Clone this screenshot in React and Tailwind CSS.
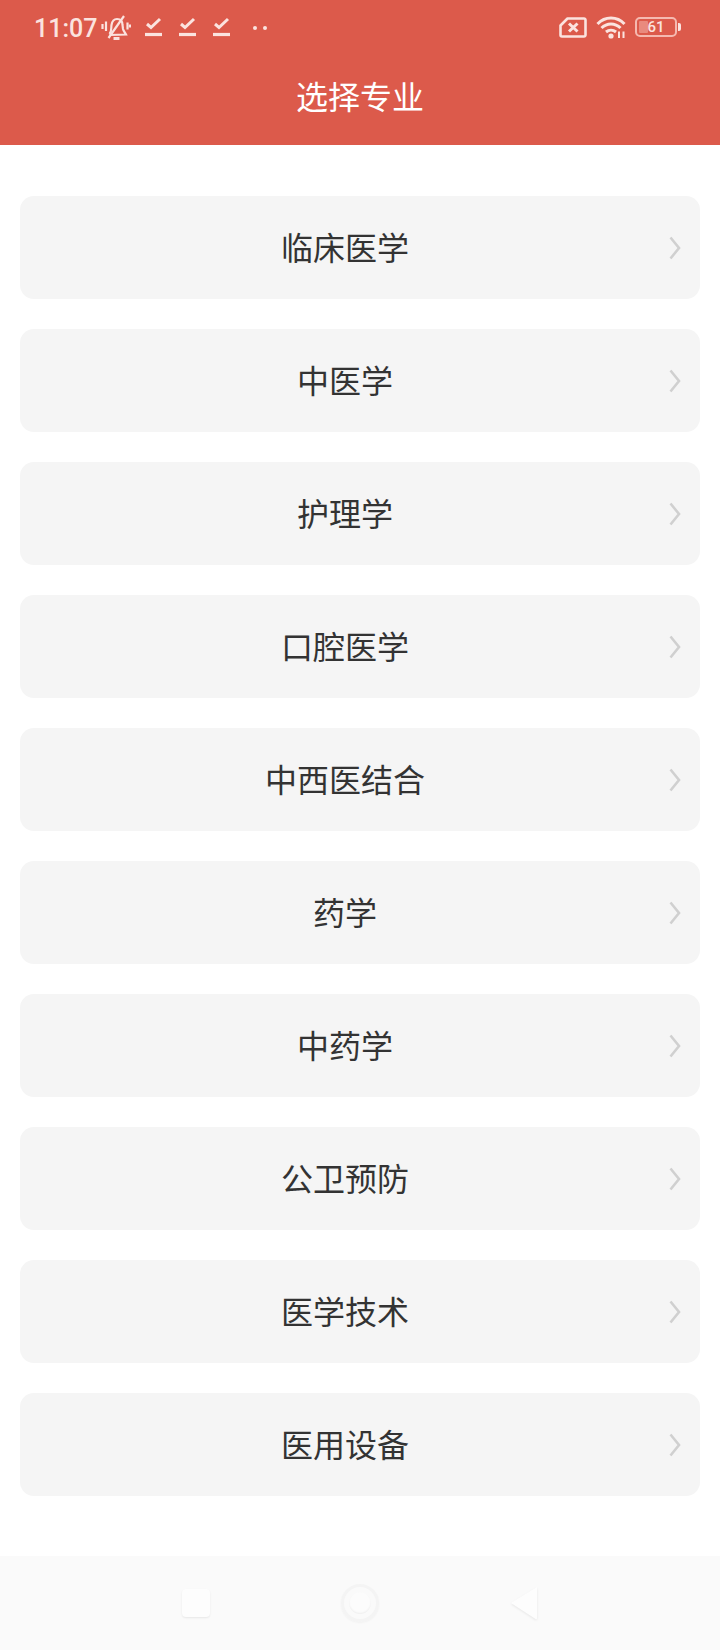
const items = ["临床医学","中医学","护理学","口腔医学","中西医结合","药学","中药学","公卫预防","医学技术","医用设备"];

function Check() {
  return (
    <svg width="17" height="20" viewBox="0 0 17 20" fill="none" stroke="#fbe3df">
      <path d="M2 7 L6 10.5 L15 2" strokeWidth="3" />
      <path d="M0 17.5 H17" strokeWidth="3.2" />
    </svg>
  );
}

function Bell() {
  return (
    <svg width="30" height="26" viewBox="0 0 30 26" fill="none" stroke="#fbe3df" strokeWidth="2.2">
      <path d="M8.5 19 C11 16 10 13 10.5 10 C11.2 6 13.5 4 16 4 C19.5 4 21.5 6.5 21.5 10 L22 14 C22.5 16 24 17.5 25 19.5 L8.5 20" />
      <path d="M12.5 23.5 H18.5" strokeWidth="3" />
      <path d="M7.5 23 L23 1" />
      <path d="M1.5 9 V14 M5 6.5 V16 M26.5 7.5 V14.5 M29 9.5 V12.5" strokeWidth="2.2" />
    </svg>
  );
}

function Sim() {
  return (
    <svg width="28" height="21" viewBox="0 0 28 21" fill="none" stroke="#fbe3df">
      <path d="M8.5 1.5 H25 A1.5 1.5 0 0 1 26.5 3 V18 A1.5 1.5 0 0 1 25 19.5 H3 A1.5 1.5 0 0 1 1.5 18 V8.5 Z" strokeWidth="2.6" strokeLinejoin="round" />
      <path d="M10 6.5 L18.5 14.5 M18.5 6.5 L10 14.5" strokeWidth="3" />
    </svg>
  );
}

function Wifi() {
  return (
    <svg width="30" height="23" viewBox="0 0 30 23" fill="none" stroke="#fbe3df">
      <path d="M1.5 8 C9 0 21 0 28.5 8" strokeWidth="3" />
      <path d="M5.5 12 C11 6.5 19 6.5 24.5 12" strokeWidth="3" />
      <path d="M10 16 C13 13.5 17 13.5 20 16" strokeWidth="3" />
      <circle cx="15" cy="20" r="2.6" fill="#fbe3df" stroke="none" />
      <path d="M23 15.5 V22 M27.5 15.5 V22" strokeWidth="2" />
    </svg>
  );
}

function Battery() {
  return (
    <div className="flex items-center gap-[1px]">
      <div className="relative flex h-[20px] w-[42px] items-center justify-center rounded-[5px] border-2 border-[#f5b9b0]">
        <div className="absolute top-[2px] bottom-[2px] left-[2px] w-[9px] rounded-[1px] bg-[#e98a7e]" />
        <span className="relative text-[15px] leading-none font-medium text-[#fbe3df] font-['Roboto',sans-serif]">61</span>
      </div>
      <div className="h-[8px] w-[3px] rounded-r-[2px] bg-[#fbe3df]" />
    </div>
  );
}

export default function App() {
  return (
    <div className="flex h-[1650px] w-[720px] flex-col bg-white font-['Noto_Sans_CJK_SC','Noto_Sans',sans-serif]">
      <header className="h-[145px] bg-[#dc5a4b]">
        <div className="flex h-[56px] items-center pl-[34px] pr-[39px]">
          <span className="text-[25px] leading-none font-medium text-[#fbe3df] font-['Roboto',sans-serif]">11:07</span>
          <span className="mb-[1px] ml-[4px]"><Bell /></span>
          <span className="mb-[2px] ml-[14px]"><Check /></span>
          <span className="mb-[2px] ml-[17px]"><Check /></span>
          <span className="mb-[2px] ml-[17px]"><Check /></span>
          <span className="ml-[23px] flex gap-[6px]">
            <i className="size-[4px] rounded-full bg-[#fbe3df]" />
            <i className="size-[4px] rounded-full bg-[#fbe3df]" />
          </span>
          <span className="mb-[2px] ml-auto flex items-center gap-[9px]">
            <Sim />
            <Wifi />
            <Battery />
          </span>
        </div>
        <h1 className="mt-[12px] text-center text-[32px] leading-[54px] font-normal text-white">选择专业</h1>
      </header>
      <main className="flex flex-1 flex-col gap-[30px] px-[20px] pt-[51px]">
        {items.map((t) => (
          <div key={t} className="relative flex h-[103px] items-center justify-center rounded-[14px] bg-[#f5f5f5] pr-[30px] pb-[4px]">
            <span className="text-[32px] leading-none text-[#333333]">{t}</span>
            <svg className="absolute top-1/2 right-[19px] -translate-y-1/2" width="12" height="24" viewBox="0 0 12 24" fill="none" stroke="#d0d0d0" strokeWidth="2.6">
              <path d="M1.5 1.5 L10 12 L1.5 22.5" />
            </svg>
          </div>
        ))}
      </main>
      <nav className="flex h-[94px] items-center justify-center bg-[#fafafa]">
        <div className="flex items-center gap-[131px]">
          <div className="size-[28px] rounded-[4px] bg-[#fdfdfd] shadow-[0_1px_2px_rgba(0,0,0,0.08)]" />
          <div className="flex size-[38px] items-center justify-center rounded-full border-[3px] border-[#f4f4f4] shadow-[0_1px_2px_rgba(0,0,0,0.04)]">
            <div className="size-[22px] rounded-full bg-[#fcfcfc] shadow-[inset_0_-1px_2px_rgba(0,0,0,0.06)]" />
          </div>
          <svg width="28" height="34" viewBox="0 0 28 34" className="drop-shadow-[0_1px_1px_rgba(0,0,0,0.08)]">
            <path d="M27 1 V32 A1 1 0 0 1 25.5 33 L1 17 Z" fill="#fdfdfd" />
          </svg>
        </div>
      </nav>
    </div>
  );
}
